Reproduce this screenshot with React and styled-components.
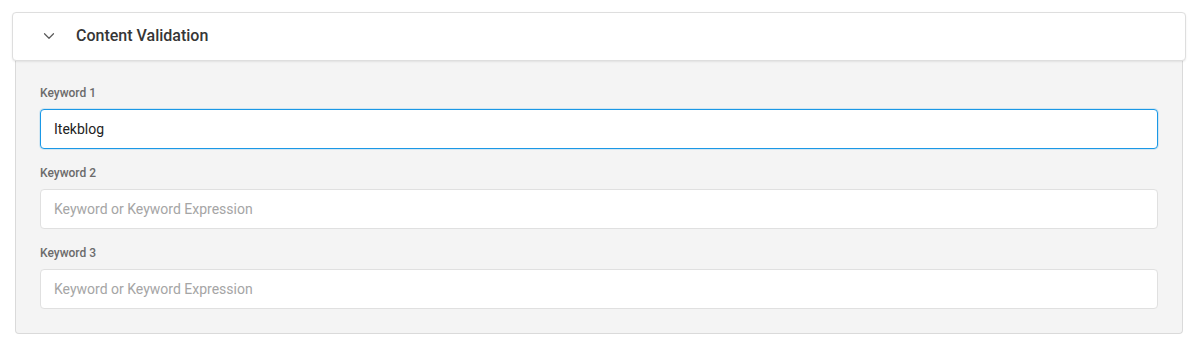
import { useState } from "react";
import styled, { createGlobalStyle } from "styled-components";
import { ChevronDown } from "lucide-react";

const GlobalStyle = createGlobalStyle`
  html, body { margin: 0; padding: 0; background: #ffffff; }
  body { font-family: Roboto, "Noto Sans", Arial, sans-serif; }
  * { box-sizing: border-box; }
`;

const Page = styled.div`
  padding: 12px 6px 10px 12px;
`;

const Header = styled.div`
  display: flex;
  align-items: center;
  height: 49px;
  padding: 0 0 2px 27px;
  background: #fff;
  border: 1px solid #dedede;
  border-radius: 4px;
  box-shadow: 0 1px 2px rgba(0, 0, 0, 0.08);
  position: relative;
  z-index: 1;
`;

const Toggle = styled.span`
  display: flex;
  width: 18px;
  color: #5a5a5a;
  margin-right: 18px;
`;

const Title = styled.h2`
  margin: 0;
  font-size: 16px;
  font-weight: 500;
  color: #363636;
`;

const Body = styled.div`
  margin: -1px 3px 0 3px;
  padding: 25px 24px 24px 24px;
  background: #f4f4f4;
  border: 1px solid #dadada;
  border-top: none;
  border-radius: 0 0 4px 4px;
  display: flex;
  flex-direction: column;
  gap: 16px;
`;

const Field = styled.div`
  display: flex;
  flex-direction: column;
  gap: 8px;
`;

const Label = styled.label`
  font-size: 12px;
  line-height: 16px;
  font-weight: 500;
  color: #6b6b6b;
`;

const Input = styled.input`
  height: 40px;
  padding: 0 13px;
  font-family: inherit;
  font-size: 14px;
  color: #222;
  background: #fff;
  border: 1px solid ${(p) => (p.$focused ? "#1a98e6" : "#e0e0e0")};
  border-radius: 4px;
  outline: none;
  caret-color: #111;
  box-shadow: ${(p) => (p.$focused ? "0 0 0 1px rgba(26,152,230,0.15)" : "none")};
  &::placeholder { color: #a5a5a5; }
`;

const fields = [
  { label: "Keyword 1", value: "Itekblog", focused: true },
  { label: "Keyword 2", value: "" },
  { label: "Keyword 3", value: "" },
];

export default function App() {
  const [values, setValues] = useState(fields.map((f) => f.value));
  return (
    <>
      <GlobalStyle />
      <Page>
        <Header>
          <Toggle>
            <ChevronDown size={18} strokeWidth={1.6} />
          </Toggle>
          <Title>Content Validation</Title>
        </Header>
        <Body>
          {fields.map((f, i) => (
            <Field key={f.label}>
              <Label>{f.label}</Label>
              <Input
                $focused={f.focused}
                autoFocus={f.focused}
                value={values[i]}
                placeholder="Keyword or Keyword Expression"
                onChange={(e) => {
                  const next = [...values];
                  next[i] = e.target.value;
                  setValues(next);
                }}
              />
            </Field>
          ))}
        </Body>
      </Page>
    </>
  );
}
